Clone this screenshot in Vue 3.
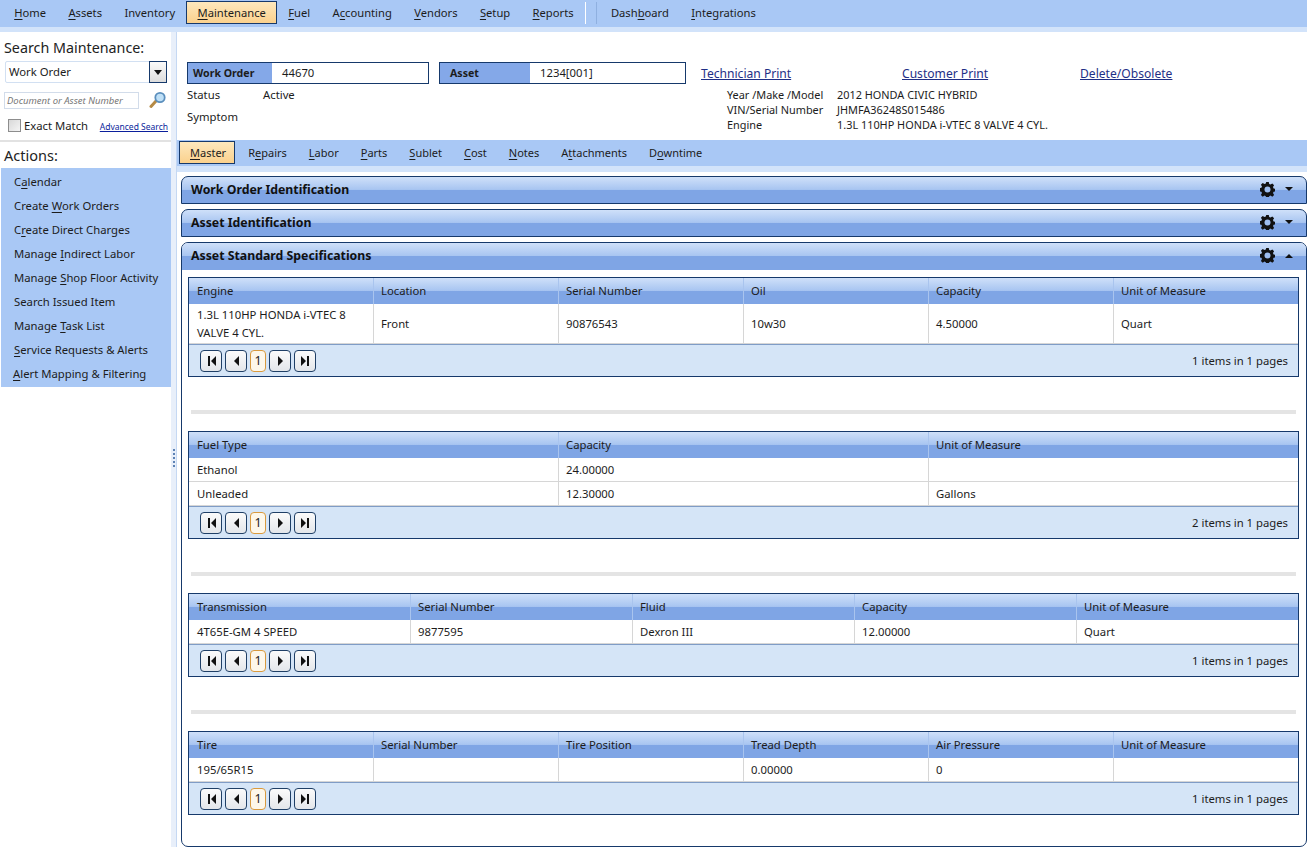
<script setup>
const mainNav = [
  ['', 'H', 'ome'], ['', 'A', 'ssets'], ['Inventory', '', ''], ['', 'M', 'aintenance', true],
  ['', 'F', 'uel'], ['A', 'c', 'counting'], ['', 'V', 'endors'], ['', 'S', 'etup'], ['', 'R', 'eports'],
]
const extraNav = [['Dash', 'b', 'oard'], ['', 'I', 'ntegrations']]
const subNav = [
  ['', 'M', 'aster', true], ['R', 'e', 'pairs'], ['', 'L', 'abor'], ['', 'P', 'arts'], ['', 'S', 'ublet'],
  ['', 'C', 'ost'], ['', 'N', 'otes'], ['A', 't', 'tachments'], ['D', 'o', 'wntime'],
]
const actions = [
  ['C', 'a', 'lendar'], ['Create ', 'W', 'ork Orders'], ['C', 'r', 'eate Direct Charges'],
  ['Manage ', 'I', 'ndirect Labor'], ['Manage ', 'S', 'hop Floor Activity'], ['Search Issued Item', '', ''],
  ['Manage ', 'T', 'ask List'], ['', 'S', 'ervice Requests & Alerts'], ['', 'A', 'lert Mapping & Filtering'],
]
const grids = [
  {
    cols: ['Engine', 'Location', 'Serial Number', 'Oil', 'Capacity', 'Unit of Measure'],
    rows: [['1.3L 110HP HONDA i-VTEC 8 VALVE 4 CYL.', 'Front', '90876543', '10w30', '4.50000', 'Quart']],
    count: '1 items in 1 pages',
  },
  {
    cols: ['Fuel Type', 'Capacity', 'Unit of Measure'],
    rows: [['Ethanol', '24.00000', ''], ['Unleaded', '12.30000', 'Gallons']],
    count: '2 items in 1 pages',
  },
  {
    cols: ['Transmission', 'Serial Number', 'Fluid', 'Capacity', 'Unit of Measure'],
    rows: [['4T65E-GM 4 SPEED', '9877595', 'Dexron III', '12.00000', 'Quart']],
    count: '1 items in 1 pages',
  },
  {
    cols: ['Tire', 'Serial Number', 'Tire Position', 'Tread Depth', 'Air Pressure', 'Unit of Measure'],
    rows: [['195/65R15', '', '', '0.00000', '0', '']],
    count: '1 items in 1 pages',
  },
]
const pagerIcons = [
  'M3 1h2v10H3zM11 1v10L6 6z',
  'M9 1v10L4 6z',
  null,
  'M4 1v10l5-5z',
  'M2 1v10l5-5zM8 1h2v10H8z',
]
const gearPath = 'M6.2 0h2.6l.4 2 1.3.6 1.8-1.1 1.8 1.8-1.1 1.8.6 1.3 2 .4v2.6l-2 .4-.6 1.3 1.1 1.8-1.8 1.8-1.8-1.1-1.3.6-.4 2H6.2l-.4-2-1.3-.6-1.8 1.1-1.8-1.8 1.1-1.8-.6-1.3-2-.4V6.2l2-.4.6-1.3-1.1-1.8 1.8-1.8 1.8 1.1 1.3-.6z'
</script>

<template>
  <div class="app">
    <nav class="topbar">
      <a v-for="n in mainNav" :key="n[2] + n[0]" class="tab" :class="{ active: n[3] }">{{ n[0] }}<u>{{ n[1] }}</u>{{ n[2] }}</a>
      <span class="nav-sep"></span>
      <a v-for="n in extraNav" :key="n[2]" class="tab">{{ n[0] }}<u>{{ n[1] }}</u>{{ n[2] }}</a>
    </nav>
    <div class="strip"></div>

    <div class="body">
      <aside class="sidebar">
        <div class="side-title">Search Maintenance:</div>
        <div class="select">
          <span class="select-text">Work Order</span>
          <span class="select-btn"><i></i></span>
        </div>
        <div class="search-row">
          <div class="doc-input">Document or Asset Number</div>
          <svg class="magnifier" width="18" height="18" viewBox="0 0 18 18">
            <path d="M7 10 2 15.5" stroke="#b58a45" stroke-width="3" stroke-linecap="round" />
            <circle cx="11" cy="6.5" r="4.7" fill="#bfe0f7" stroke="#5b8fbd" stroke-width="1.8" />
          </svg>
        </div>
        <div class="match-row">
          <label class="match"><span class="check"></span>Exact Match</label>
          <a class="adv">Advanced Search</a>
        </div>
        <div class="side-title actions-title">Actions:</div>
        <ul class="actions">
          <li v-for="a in actions" :key="a[2] + a[0]">{{ a[0] }}<u>{{ a[1] }}</u>{{ a[2] }}</li>
        </ul>
      </aside>

      <div class="splitter"><span></span></div>

      <main class="main">
        <section class="summary">
          <div class="summary-left">
            <div class="field-row">
              <div class="field wo"><b>Work Order</b><span>44670</span></div>
              <div class="field asset"><b>Asset</b><span>1234[001]</span></div>
            </div>
            <div class="status"><span class="k">Status</span><span>Active</span></div>
            <div class="status symptom"><span class="k">Symptom</span></div>
          </div>
          <div class="summary-right">
            <div class="links">
              <a>Technician Print</a>
              <a>Customer Print</a>
              <a>Delete/Obsolete</a>
            </div>
            <dl class="vehicle">
              <dt>Year /Make /Model</dt><dd>2012 HONDA CIVIC HYBRID</dd>
              <dt>VIN/Serial Number</dt><dd>JHMFA36248S015486</dd>
              <dt>Engine</dt><dd>1.3L 110HP HONDA i-VTEC 8 VALVE 4 CYL.</dd>
            </dl>
          </div>
        </section>

        <nav class="subbar">
          <a v-for="n in subNav" :key="n[2]" class="subtab" :class="{ active: n[3] }">{{ n[0] }}<u>{{ n[1] }}</u>{{ n[2] }}</a>
        </nav>
        <div class="substrip"></div>

        <div class="panels">
          <div v-for="t in ['Work Order Identification', 'Asset Identification']" :key="t" class="panel-head closed">
            <h3>{{ t }}</h3>
            <svg class="gear" width="15" height="15" viewBox="0 0 15 15"><path :d="gearPath" fill-rule="evenodd" /><circle cx="7.5" cy="7.5" r="3" fill="#9dbdee" /></svg>
            <i class="caret down"></i>
          </div>

          <div class="panel-open">
            <div class="panel-head">
              <h3>Asset Standard Specifications</h3>
              <svg class="gear" width="15" height="15" viewBox="0 0 15 15"><path :d="gearPath" fill-rule="evenodd" /><circle cx="7.5" cy="7.5" r="3" fill="#9dbdee" /></svg>
              <i class="caret up"></i>
            </div>
            <div class="panel-body">
              <template v-for="(g, gi) in grids" :key="gi">
                <div v-if="gi" class="rule"></div>
                <div class="grid">
                  <div class="grid-row grid-head">
                    <div v-for="c in g.cols" :key="c" class="cell">{{ c }}</div>
                  </div>
                  <div v-for="(r, ri) in g.rows" :key="ri" class="grid-row grid-data">
                    <div v-for="(v, vi) in r" :key="vi" class="cell">{{ v }}</div>
                  </div>
                  <div class="pager">
                    <template v-for="(p, pi) in pagerIcons" :key="pi">
                      <span v-if="p" class="page-btn">
                        <svg width="12" height="12" viewBox="0 0 12 12"><path :d="p" /></svg>
                      </span>
                      <span v-else class="page-num">1</span>
                    </template>
                    <span class="count">{{ g.count }}</span>
                  </div>
                </div>
              </template>
            </div>
          </div>
        </div>
      </main>
    </div>
  </div>
</template>

<style>
html, body { margin: 0; background: #fff; overflow: hidden; }
</style>

<style scoped>
.app {
  width: 1307px;
  height: 847px;
  display: flex;
  flex-direction: column;
  overflow: hidden;
  font-family: "Noto Sans", "Open Sans", sans-serif;
  font-size: 11.3px;
  color: #1c1c1c;
}
u { text-underline-offset: 2px; }

/* top menu */
.topbar {
  height: 27px;
  flex: none;
  box-sizing: border-box;
  display: flex;
  align-items: flex-start;
  padding: 1px 0 0 3px;
  background: #a9c8f5;
  font-size: 11.2px;
}
.tab {
  padding: 0 10.2px;
  line-height: 21px;
  white-space: nowrap;
  border: 1px solid transparent;
}
.tab.active {
  background: linear-gradient(#fde8bd, #fbd18d);
  border-color: #16396b;
}
.nav-sep {
  width: 1px;
  height: 22px;
  margin: 1px 14px 0 0;
  background: #fff;
  box-shadow: 11px 0 0 #8fb0e0;
}
.strip { height: 5px; flex: none; background: #d2e3fa; }

.body { flex: 1; display: flex; min-height: 0; }

/* left side */
.sidebar { width: 171px; flex: none; padding-top: 6px; box-sizing: border-box; }
.side-title { font-size: 14.3px; line-height: 20px; padding-left: 4px; color: #222; }
.select {
  margin: 3px 4px 0 5px;
  height: 22px;
  display: flex;
  border: 1px solid #d2e0f2;
  border-radius: 2px;
  box-sizing: border-box;
}
.select-text { flex: 1; padding-left: 3px; line-height: 19px; }
.select-btn {
  width: 16px;
  margin: -1px -1px -1px 0;
  border: 1px solid #16396b;
  background: linear-gradient(#fafafa, #dcdcdc);
  display: flex;
  align-items: center;
  justify-content: center;
}
.select-btn i { border: 4px solid transparent; border-top: 5px solid #111; border-bottom: 0; }
.search-row { display: flex; align-items: center; padding: 8px 4px 0 4px; }
.doc-input {
  width: 135px;
  height: 17px;
  box-sizing: border-box;
  border: 1px solid #d2dcea;
  font-size: 9.5px;
  font-style: italic;
  line-height: 15px;
  padding-left: 2px;
  color: #777;
  white-space: nowrap;
  overflow: hidden;
}
.magnifier { margin-left: 10px; }
.match-row {
  display: flex;
  align-items: center;
  justify-content: space-between;
  padding: 9px 3px 7px 8px;
  border-bottom: 2px solid #e2e2e2;
  height: 15px;
}
.match { display: flex; align-items: center; gap: 3px; }
.check {
  width: 11px;
  height: 11px;
  border: 1px solid #8d8d8d;
  background: linear-gradient(135deg, #d8d8d8, #f5f5f5);
}
.adv { font-size: 8.5px; color: #0b1f9c; text-decoration: underline; white-space: nowrap; padding-top: 2px; }
.actions-title { margin-top: 3px; font-size: 14.5px; }
.actions {
  list-style: none;
  margin: 3px 0 0 1px;
  padding: 2px 0 1px;
  background: #a9c8f5;
}
.actions li { height: 24px; line-height: 24px; padding-left: 13px; white-space: nowrap; }
.actions li:last-child { padding-left: 12px; }

.splitter {
  width: 6px;
  flex: none;
  padding-top: 38px;
  background: #e8effa;
  border-right: 1px solid #c5d8f3;
  box-sizing: border-box;
  display: flex;
  align-items: center;
  justify-content: center;
}
.splitter span {
  width: 2px;
  height: 20px;
  background: repeating-linear-gradient(#5d82b5 0 2px, transparent 2px 4px);
}

/* main */
.main { flex: 1; min-width: 0; display: flex; flex-direction: column; }
.summary { height: 108px; flex: none; display: flex; box-sizing: border-box; padding: 30px 0 0 10px; }
.summary-left { width: 514px; flex: none; }
.field-row { display: flex; gap: 10px; }
.field {
  height: 22px;
  box-sizing: border-box;
  display: flex;
  border: 1px solid #16396b;
  line-height: 20px;
}
.field b { background: #84a8e8; padding-left: 5px; box-sizing: border-box; font-weight: 700; font-size: 10.6px; }
.field span { padding-left: 10px; }
.wo { width: 242px; }
.wo b { width: 84px; }
.asset { width: 247px; }
.asset b { width: 90px; padding-left: 10px; }
.status { display: flex; margin-top: 2px; line-height: 18px; }
.status .k { width: 76px; }
.symptom { margin-top: 4px; }
.summary-right { flex: 1; }
.links { display: flex; height: 23px; align-items: center; }
.links a { color: #1f2f86; text-decoration: underline; font-size: 12.1px; }
.links a:nth-child(1) { width: 201px; }
.links a:nth-child(2) { width: 178px; }
.vehicle {
  margin: 2px 0 0 26px;
  display: grid;
  grid-template-columns: 110px 1fr;
  grid-auto-rows: 15px;
  line-height: 15px;
  font-size: 10.9px;
}
.vehicle dd { margin: 0; }

.subbar {
  height: 26px;
  flex: none;
  box-sizing: border-box;
  display: flex;
  align-items: flex-start;
  padding: 1px 0 0 2px;
  background: #a9c8f5;
  font-size: 11px;
}
.subtab { padding: 0 10px; line-height: 21px; white-space: nowrap; border: 1px solid transparent; }
.subtab.active {
  padding-right: 8px;
  margin-right: 2px;
  background: linear-gradient(#fde8bd, #fbd18d);
  border-color: #16396b;
}
.substrip { height: 6px; flex: none; background: #d2e3fa; }

.panels {
  flex: 1;
  padding: 4px 0 0 4px;
  display: flex;
  flex-direction: column;
  gap: 5px;
  min-height: 0;
}
.panel-head {
  height: 27px;
  flex: none;
  box-sizing: border-box;
  display: flex;
  align-items: center;
  padding: 0 13px 2px 9px;
  background: linear-gradient(#cfe0f9 0, #a8c5f1 48%, #7fa5e5 50%, #7fa5e5 100%);
}
.panel-head.closed {
  height: 28px;
  border: 1px solid #16396b;
  border-radius: 7px 7px 0 0;
}
.panel-head h3 { flex: 1; margin: 0; font-size: 12.3px; font-weight: 700; color: #111; }
.gear { fill: #111; margin-right: 10px; }
.caret { width: 0; height: 0; border: 4px solid transparent; }
.caret.down { border-top: 4px solid #111; border-bottom: 0; }
.caret.up { border-bottom: 4px solid #111; border-top: 0; }

.panel-open {
  flex: 1;
  border: 1px solid #16396b;
  border-radius: 7px;
  overflow: hidden;
  min-height: 0;
}
.panel-body { padding: 7px 7px 0 6px; }
.rule { height: 4px; margin: 33px 3px 17px 3px; background: #e4e4e4; }

.grid { border: 1px solid #16396b; }
.grid-row { display: flex; }
.cell {
  flex: 1 1 0;
  min-width: 0;
  box-sizing: border-box;
  padding: 0 7px 0 8px;
  display: flex;
  align-items: center;
}
.cell + .cell { padding: 0 8px 0 7px; }
.grid-head {
  height: 26px;
  background: linear-gradient(#cfe0f9 0, #a8c5f1 48%, #7fa5e5 50%, #7fa5e5 100%);
}
.grid-head .cell { padding-bottom: 2px; }
.grid-head .cell + .cell { border-left: 1px solid #a9c4ee; }
.grid-data { min-height: 24px; box-sizing: border-box; border-bottom: 1px solid #d6d6d6; }
.grid-data .cell { line-height: 18px; padding-top: 2px; padding-bottom: 1px; }
.grid-data .cell + .cell { border-left: 1px solid #d6d6d6; }
.pager {
  height: 32px;
  box-sizing: border-box;
  display: flex;
  align-items: center;
  gap: 3px;
  padding: 0 10px 0 11px;
  background: #d5e5f7;
  border-top: 1px solid #7f9cc6;
}
.page-btn, .page-num {
  height: 22px;
  box-sizing: border-box;
  border-radius: 4px;
  display: flex;
  align-items: center;
  justify-content: center;
  background: linear-gradient(#fbfbfb, #e3e6ea);
}
.page-btn { width: 22px; border: 1px solid #1f3f66; }
.page-btn svg { fill: #111; }
.page-num { width: 16px; border: 1px solid #d99a3e; background: #fdf7ea; font-size: 12.5px; }
.count { margin-left: auto; }
</style>
